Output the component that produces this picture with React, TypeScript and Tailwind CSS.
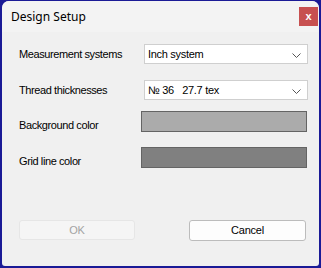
import React from "react";

const Chevron = () => (
  <svg width="9" height="5" viewBox="0 0 9 5" className="absolute right-[6px] top-[8px]">
    <path d="M0.5 0.5 L4.5 4.5 L8.5 0.5" fill="none" stroke="#555" strokeWidth="1" />
  </svg>
);

const Combo = ({ value }: { value: string }) => (
  <div className="relative ml-[142px] h-[20px] w-[164px] bg-white border border-[#cfcfcf] flex items-center pl-[3px] text-[11px] tracking-[-0.3px] text-black whitespace-pre">
    {value}
    <Chevron />
  </div>
);

export default function App() {
  return (
    <div className="w-[321px] h-[268px] bg-[#1a1a96] pt-[1px] px-[2px] pb-[2px]" style={{ fontFamily: '"Liberation Sans", Arial, sans-serif' }}>
      <div className="w-full h-full rounded-t-[7px] rounded-b-[3px] overflow-hidden bg-[#f0f0f0] flex flex-col">
        <div className="h-[31px] bg-[#f3f3f3] flex items-center justify-between pl-[9px] pr-[1px]">
          <span className="text-[12px] text-black" style={{ fontFamily: '"Noto Sans", "Open Sans", sans-serif' }}>
            Design Setup
          </span>
          <div className="w-[19px] h-[19px] bg-[#c75050] flex items-center justify-center text-white text-[11px] font-bold leading-none">
            x
          </div>
        </div>
        <div className="relative flex-1 pt-[12px] text-[11px] tracking-[-0.4px] text-black">
          <div className="relative h-[20px] flex items-center">
            <span className="absolute left-[17px] top-[4px] leading-[13px]">Measurement systems</span>
            <Combo value="Inch system" />
          </div>
          <div className="relative h-[20px] mt-[16px] flex items-center">
            <span className="absolute left-[17px] top-[4px] leading-[13px]">Thread thicknesses</span>
            <Combo value="№ 36   27.7 tex" />
          </div>
          <div className="relative h-[21px] mt-[11px]">
            <span className="absolute left-[17px] top-[8px] leading-[13px]">Background color</span>
            <div className="ml-[139px] h-[21px] w-[166px] bg-[#ababab] border border-[#646464]" />
          </div>
          <div className="relative h-[21px] mt-[15px]">
            <span className="absolute left-[17px] top-[8px] leading-[13px]">Grid line color</span>
            <div className="ml-[139px] h-[21px] w-[166px] bg-[#808080] border border-[#646464]" />
          </div>
          <div className="flex mt-[52px] pl-[17px] gap-[54px] tracking-[-0.2px]">
            <div className="w-[116px] h-[20px] rounded-[3px] bg-[#f5f5f5] border border-[#e6e6e6] flex items-center justify-center text-[#a3a3a3]">
              OK
            </div>
            <div className="w-[117px] h-[21px] rounded-[3px] bg-[#fdfdfd] border border-[#bcbcbc] flex items-center justify-center">
              Cancel
            </div>
          </div>
        </div>
      </div>
    </div>
  );
}
